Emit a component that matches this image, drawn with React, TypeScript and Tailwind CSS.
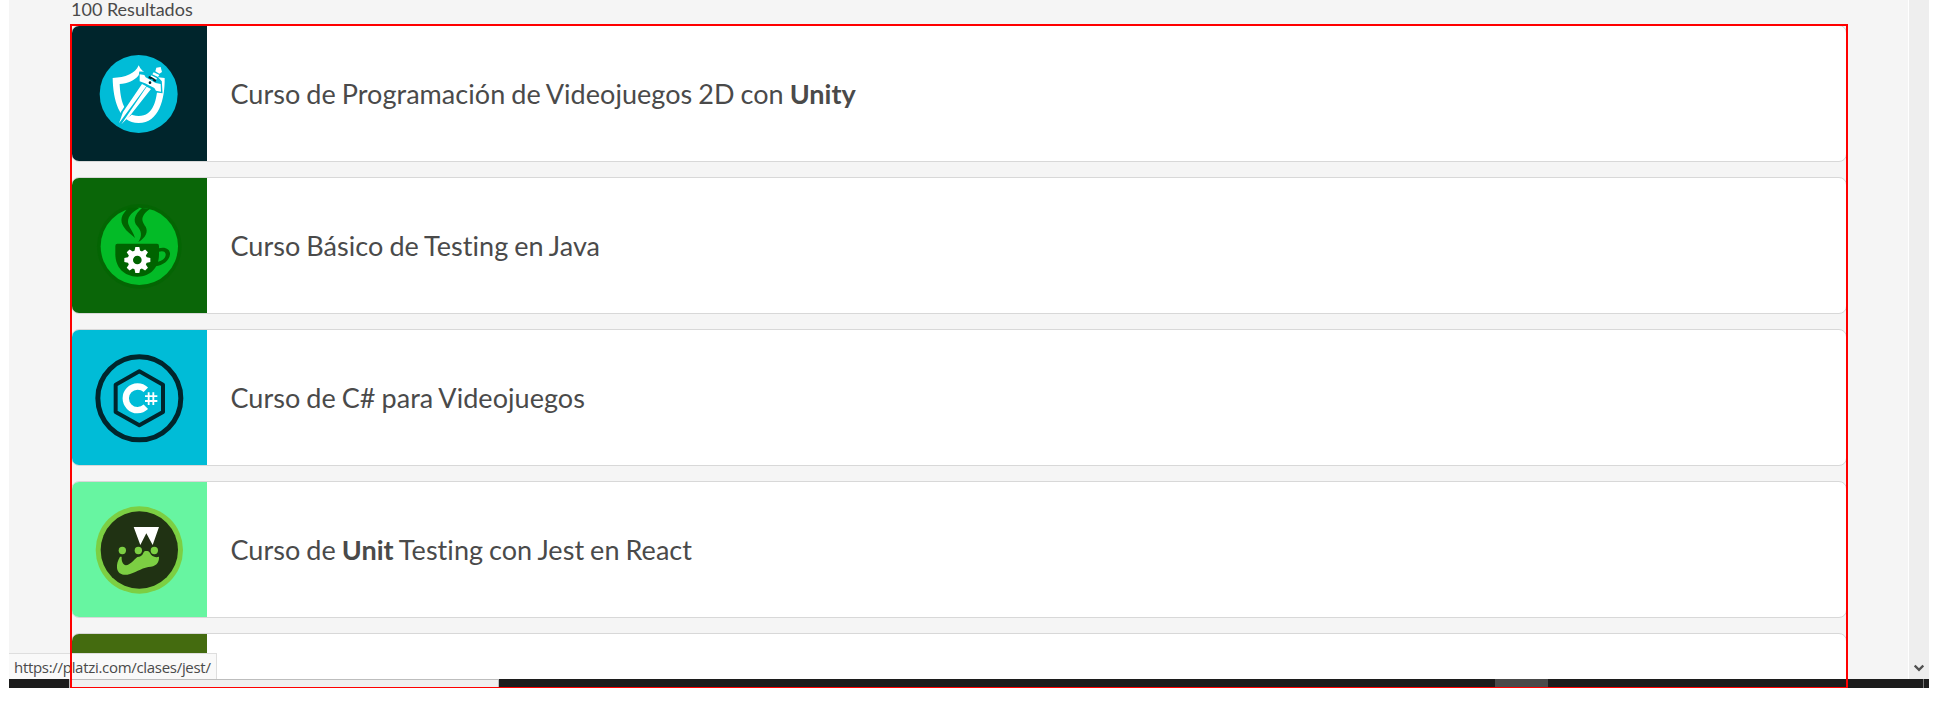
import type { ReactNode } from "react";

function SwordShieldIcon() {
  return (
    <svg viewBox="36 33 405 405" className="size-full">
      <circle cx="236" cy="237" r="117" fill="#00bcd7" />
      <path
        d="M236 151 C247 176 277 188 314 189 C315 252 297 324 236 324 C176 324 159 252 158 189 C196 188 226 176 236 151 Z M236 181 C224 197 202 206 179 207 C181 254 191 303 236 303 C281 303 291 254 293 207 C270 206 248 197 236 181 Z"
        fill="#fff"
        fillRule="evenodd"
      />
      <path d="M171 331 L184 289 L242 203 L276 223 L213 301 Z" fill="#00bcd7" />
      <path d="M240 172 L256 173 L287 182 L303 200 L305 232 L283 229 L254 207 L236 203 Z" fill="#00bcd7" stroke="#00bcd7" strokeWidth="5" />
      <path d="M177 325 L189 291 L246 207 L259 214 Z M184 328 L211 301 L273 222 L260 215 Z" fill="#fff" />
      <path d="M239 178 L253 180 L257 187 L287 204 L302 207 L303 230 L288 227 L283 219 L255 205 L239 199 Z" fill="#fff" />
      <path d="M289 158 L302 156 L306 171 L298 176 L286 169 Z" fill="#fff" />
      <path d="M281 172 L298 180 L294 186 L277 178 Z M274 181 L291 190 L288 195 L271 187 Z" fill="#fff" />
      <path d="M267 183 L277 187 L273 193 L265 189 Z M281 190 L289 195 L286 201 L279 197 Z M276 187 L285 192 L281 195 L274 191 Z" fill="#00252c" />
      <circle cx="270" cy="203" r="4" fill="#00252c" />
    </svg>
  );
}

const gearTeeth = [0, 45, 90, 135, 180, 225, 270, 315];

function JavaTestingIcon() {
  return (
    <svg viewBox="36 39 405 405" className="size-full">
      <circle cx="238" cy="244" r="127" fill="#006400" opacity="0.55" />
      <circle cx="238" cy="244" r="116" fill="#03bb27" />
      <path
        d="M207 128 C181 149 180 168 191 185 C200 200 215 209 225 219 C221 203 210 191 205 177 C200 158 214 142 238 129 Z"
        fill="#006400"
      />
      <path
        d="M246 129 C224 148 217 168 232 184 C245 199 247 213 235 231 C257 218 265 201 257 185 C245 167 239 155 270 131 Z"
        fill="#006400"
      />
      <path d="M172 236 H291 Q297 236 297 243 V268 C297 307 272 335 232 335 C191 335 166 306 166 268 V243 Q166 236 172 236 Z" fill="#006400" />
      <path
        d="M296 250 C316 244 331 253 330 268 C328 288 308 301 287 304 L291 291 C306 288 316 281 317 270 C318 260 309 256 297 260 Z"
        fill="#006400"
      />
      <circle cx="232" cy="285" r="21" fill="none" stroke="#fff" strokeWidth="16" />
      {gearTeeth.map((a) => (
        <path key={a} d="M223 260 L226 246 H238 L241 260 Z" fill="#fff" transform={`rotate(${a} 232 285)`} />
      ))}
    </svg>
  );
}

function CSharpIcon() {
  return (
    <svg viewBox="36 45 405 405" className="size-full">
      <circle cx="238" cy="250" r="124.500" fill="none" stroke="#00252c" strokeWidth="15" />
      <path d="M238 169 L309 209 V291 L238 331 L167 291 V209 Z" fill="none" stroke="#00252c" strokeWidth="12" strokeLinejoin="round" />
      <path d="M257.500 224.500 A35.500 35.500 0 1 0 257.500 275.500" fill="none" stroke="#fff" strokeWidth="19" />
      <path d="M266 232 V270 M280 232 V270 M255 243.500 H292 M255 258 H292" fill="none" stroke="#fff" strokeWidth="5.500" />
    </svg>
  );
}

function JestIcon() {
  return (
    <svg viewBox="36 36 405 405" className="size-full">
      <circle cx="238" cy="240" r="131" fill="#7ccf43" />
      <circle cx="238" cy="240" r="116" fill="#203213" />
      <path d="M221 171 H297 L278 225 L259 190 L241 225 Z" fill="#fff" />
      <path
        d="M180 260 C173 272 170 283 171 294 C173 310 186 316 202 314 C225 310 242 295 265 291 C287 290 298 279 297 260 C286 264 274 259 270 249 C265 240 253 240 250 249 C247 257 240 261 232 261 C221 271 210 284 198 286 C188 283 184 273 185 260 Z"
        fill="#7ccf43"
      />
      <path d="M248 240 H270 L264 243 H254 Z" fill="#203213" />
      <circle cx="187" cy="241.500" r="11" fill="#7ccf43" />
      <circle cx="235" cy="241.500" r="11" fill="#7ccf43" />
      <circle cx="283" cy="241.500" r="11" fill="#7ccf43" />
    </svg>
  );
}

type Course = { id: string; tile: string; icon: ReactNode; title: ReactNode };

const courses: Course[] = [
  {
    id: "unity",
    tile: "bg-[#00252c]",
    icon: <SwordShieldIcon />,
    title: (
      <>
        Curso de Programación de Videojuegos 2D con <b className="font-bold">Unity</b>
      </>
    ),
  },
  { id: "java", tile: "bg-[#0a6608]", icon: <JavaTestingIcon />, title: "Curso Básico de Testing en Java" },
  { id: "csharp", tile: "bg-[#00bcd7]", icon: <CSharpIcon />, title: "Curso de C# para Videojuegos" },
  {
    id: "jest",
    tile: "bg-[#67f5a1]",
    icon: <JestIcon />,
    title: (
      <>
        Curso de <b className="font-bold">Unit</b> Testing con Jest en React
      </>
    ),
  },
  { id: "next", tile: "bg-[#446b0f]", icon: null, title: null },
];

function CourseCard({ course }: { course: Course }) {
  return (
    <li className="flex h-[137px] shrink-0 items-center overflow-hidden rounded-lg border border-[#d8d8d8] bg-white">
      <div className={`size-[135px] shrink-0 ${course.tile}`}>{course.icon}</div>
      <h3 className="ml-[23.500px] text-[27px] leading-9 tracking-[0.050px] whitespace-nowrap text-[#4a4a4a] [font-variant-ligatures:none] [word-spacing:-1px]">
        {course.title}
      </h3>
    </li>
  );
}

export default function App() {
  return (
    <div className="h-[713px] w-[1938px] bg-white px-[9px] font-['Lato',sans-serif]">
      <div className="relative flex h-[688px] w-[1920px] flex-col">
        <div className="flex h-[679px] overflow-hidden">
          <main className="flex w-[1899px] flex-col bg-[#f5f5f5] pr-[61px] pl-[62px]">
            <p className="h-[25px] shrink-0 text-[18px] leading-[18px] text-[#4a4a4a]">100 Resultados</p>
            <ul className="flex flex-col gap-[15px]">
              {courses.map((c) => (
                <CourseCard key={c.id} course={c} />
              ))}
            </ul>
          </main>
          <aside className="flex w-[21px] items-end justify-center border-l border-white bg-[#eeeeee] pb-[7px]">
            <svg viewBox="0 0 10 8" className="mr-px h-2 w-[10px]">
              <path d="M0.700 1.500 L5 5.800 L9.300 1.500" fill="none" stroke="#505050" strokeWidth="2.300" />
            </svg>
          </aside>
        </div>
        <footer className="flex h-[9px] bg-[#1c1c1c]">
          <div className="ml-[60px] w-[430px] border-x border-t border-[#bdbdbd] bg-[#f0f0f0]" />
          <div className="ml-[996px] w-[53px] bg-[#494949]" />
          <div className="ml-[375px] w-px bg-[#777777]" />
        </footer>
        <div className="absolute top-[653px] left-0 flex h-[26px] w-[208px] items-center border-t border-r border-[#dedede] bg-[#f9f9f9] pt-[2px] pl-[5px] font-['Open_Sans',sans-serif] text-[15px] tracking-[-0.300px] whitespace-nowrap text-[#4a4a4a]">
          https://platzi.com/clases/jest/
        </div>
        <div className="pointer-events-none absolute top-6 left-[61px] h-[664px] w-[1778px] border-x-2 border-t-2 border-b border-[#ff0000]" />
      </div>
    </div>
  );
}
